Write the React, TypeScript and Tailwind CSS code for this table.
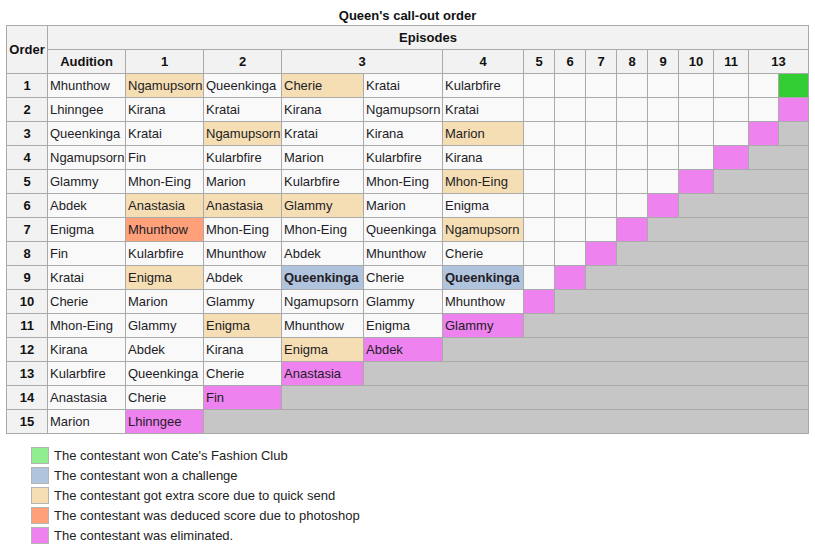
import React from "react";

const BG: Record<string, string> = {
  w: "bg-[#f9f9f9]",
  t: "bg-[#f5deb3]",
  p: "bg-[#ee82ee]",
  g: "bg-[#c6c6c6]",
  G: "bg-[#32cd32]",
  o: "bg-[#ffa07a]",
  b: "bg-[#b0c4de]",
};

const SPAN: Record<number, string> = {
  1: "",
  2: "[grid-column:span_2/span_2]",
  3: "[grid-column:span_3/span_3]",
  4: "[grid-column:span_4/span_4]",
  5: "[grid-column:span_5/span_5]",
  6: "[grid-column:span_6/span_6]",
  7: "[grid-column:span_7/span_7]",
  8: "[grid-column:span_8/span_8]",
  9: "[grid-column:span_9/span_9]",
  10: "[grid-column:span_10/span_10]",
  11: "[grid-column:span_11/span_11]",
  12: "[grid-column:span_12/span_12]",
  13: "[grid-column:span_13/span_13]",
};

const e = (n: number) => Array.from({ length: n }, () => "");

const ROWS: string[][] = [
  ["Mhunthow", "Ngamupsorn|t", "Queenkinga", "Cherie|t", "Kratai", "Kularbfire", ...e(8), "|G"],
  ["Lhinngee", "Kirana", "Kratai", "Kirana", "Ngamupsorn", "Kratai", ...e(8), "|p"],
  ["Queenkinga", "Kratai", "Ngamupsorn|t", "Kratai", "Kirana", "Marion|t", ...e(7), "|p", "|g1"],
  ["Ngamupsorn", "Fin", "Kularbfire", "Marion", "Kularbfire", "Kirana", ...e(6), "|p", "|g2"],
  ["Glammy", "Mhon-Eing", "Marion", "Kularbfire", "Mhon-Eing", "Mhon-Eing|t", ...e(5), "|p", "|g3"],
  ["Abdek", "Anastasia|t", "Anastasia|t", "Glammy|t", "Marion", "Enigma", ...e(4), "|p", "|g4"],
  ["Enigma", "Mhunthow|o", "Mhon-Eing", "Mhon-Eing", "Queenkinga", "Ngamupsorn|t", ...e(3), "|p", "|g5"],
  ["Fin", "Kularbfire", "Mhunthow", "Abdek", "Mhunthow", "Cherie", ...e(2), "|p", "|g6"],
  ["Kratai", "Enigma|t", "Abdek", "Queenkinga|b", "Cherie", "Queenkinga|b", "", "|p", "|g7"],
  ["Cherie", "Marion", "Glammy", "Ngamupsorn", "Glammy", "Mhunthow", "|p", "|g8"],
  ["Mhon-Eing", "Glammy", "Enigma|t", "Mhunthow", "Enigma", "Glammy|p", "|g9"],
  ["Kirana", "Abdek", "Kirana", "Enigma|t", "Abdek|p", "|g10"],
  ["Kularbfire", "Queenkinga", "Cherie", "Anastasia|p", "|g11"],
  ["Anastasia", "Cherie", "Fin|p", "|g12"],
  ["Marion", "Lhinngee|p", "|g13"],
];

const HEAD = "bg-[#f2f2f2] font-bold text-[#111] flex items-center justify-center";

function Cell({ spec }: { spec: string }) {
  const [text, code = "w"] = spec.split("|");
  let key = code;
  let span = 1;
  if (code.startsWith("g")) {
    key = "g";
    span = parseInt(code.slice(1) || "1", 10);
  }
  const bold = key === "b";
  return (
    <div
      className={`${BG[key]} ${SPAN[span]} flex items-center px-[2px] whitespace-nowrap overflow-hidden text-[#231c26] ${
        bold ? "font-bold" : ""
      }`}
    >
      {text}
    </div>
  );
}

const LEGEND: [string, string][] = [
  ["bg-[#90ee90]", "The contestant won Cate's Fashion Club"],
  ["bg-[#b0c4de]", "The contestant won a challenge"],
  ["bg-[#f5deb3]", "The contestant got extra score due to quick send"],
  ["bg-[#ffa07a]", "The contestant was deduced score due to photoshop"],
  ["bg-[#ee82ee]", "The contestant was eliminated."],
];

export default function App() {
  return (
    <div className="w-[815px] h-[546px] bg-white font-['Liberation_Sans',Arial,sans-serif] text-[13px] leading-[15px] pl-[6px]">
      <div className="w-[803px] h-[25px] pt-[8px] text-center font-bold text-[#111]">
        Queen's call-out order
      </div>
      <div className="w-[803px] grid grid-cols-[40px_77px_77px_77px_81px_78px_80px_30px_30px_30px_30px_30px_34px_34px_29px_29px] auto-rows-[23px] gap-px p-px bg-[#aaaaaa]">
        <div className={`${HEAD} row-span-2`}>Order</div>
        <div className={`${HEAD} [grid-column:span_15/span_15]`}>Episodes</div>
        <div className={HEAD}>Audition</div>
        <div className={HEAD}>1</div>
        <div className={HEAD}>2</div>
        <div className={`${HEAD} [grid-column:span_2/span_2]`}>3</div>
        <div className={HEAD}>4</div>
        <div className={HEAD}>5</div>
        <div className={HEAD}>6</div>
        <div className={HEAD}>7</div>
        <div className={HEAD}>8</div>
        <div className={HEAD}>9</div>
        <div className={HEAD}>10</div>
        <div className={HEAD}>11</div>
        <div className={`${HEAD} [grid-column:span_2/span_2]`}>13</div>
        {ROWS.map((row, i) => (
          <React.Fragment key={i}>
            <div className={HEAD}>{i + 1}</div>
            {row.map((s, j) => (
              <Cell key={j} spec={s} />
            ))}
          </React.Fragment>
        ))}
      </div>
      <div className="mt-[13px] ml-[25px] flex flex-col gap-[3px]">
        {LEGEND.map(([bg, label]) => (
          <div key={label} className="flex items-center h-[17px]">
            <div className={`${bg} w-[18px] h-[17px] border border-[#b4b4b4]`} />
            <span className="ml-[5px] text-[#222] leading-[17px]">{label}</span>
          </div>
        ))}
      </div>
    </div>
  );
}
